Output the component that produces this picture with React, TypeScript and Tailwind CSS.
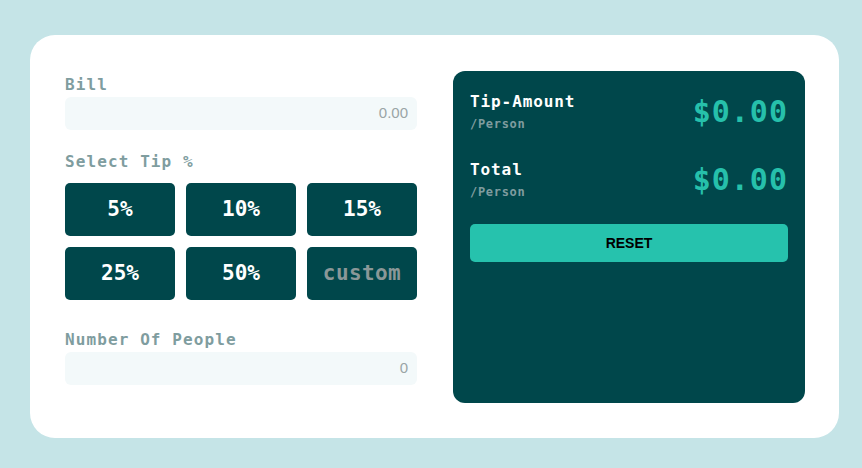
const tips = ['5%', '10%', '15%', '25%', '50%']

const mono = "font-['DejaVu_Sans_Mono','Liberation_Mono',monospace] font-bold"

function Field({ label, value, first }: { label: string; value: string; first?: boolean }) {
  return (
    <div className={first ? 'mt-[2px]' : 'mt-[28px]'}>
      <p className={`${mono} text-[16px] leading-[24px] tracking-[1.1px] text-[#7f9d9f]`}>{label}</p>
      <div className="flex h-[33px] items-center justify-end rounded-[6px] bg-[#f3f9fa] pr-[9px] font-['Liberation_Sans',Arial,sans-serif] text-[15px] text-[#9aa5a6]">
        {value}
      </div>
    </div>
  )
}

function ResultRow({ title, amount }: { title: string; amount: string }) {
  return (
    <div className="flex items-center justify-between">
      <div>
        <p className={`${mono} text-[16px] leading-[22px] tracking-[0.9px] text-white`}>{title}</p>
        <p className={`${mono} mt-[2px] text-[12px] leading-[18px] tracking-[0.7px] text-[#7f9c9f]`}>/Person</p>
      </div>
      <p className={`${mono} text-[30px] leading-[36px] tracking-[1px] text-[#26c0ab]`}>{amount}</p>
    </div>
  )
}

export default function App() {
  return (
    <div className="min-h-[468px] w-full bg-[#c5e4e7] pl-[30px] pt-[35px] pb-[30px]">
      <div className="flex h-[403px] w-[809px] gap-[36px] rounded-[25px] bg-white pl-[35px] pt-[36px]">
        {/* left: inputs */}
        <div className="w-[352px] shrink-0">
          <Field label="Bill" value="0.00" first />

          <p className={`${mono} mt-[20px] text-[16px] leading-[24px] tracking-[1.1px] text-[#7f9d9f]`}>Select Tip %</p>
          <div className="mt-[9px] grid grid-cols-3 gap-[11px]">
            {tips.map((t) => (
              <button
                key={t}
                className={`${mono} flex h-[53px] items-center justify-center rounded-[5px] bg-[#00474b] text-[21px] text-white`}
              >
                {t}
              </button>
            ))}
            <div
              className={`${mono} flex h-[53px] items-center justify-center rounded-[5px] bg-[#00474b] text-[21px] tracking-[0.4px] text-[#8a9798]`}
            >
              custom
            </div>
          </div>

          <Field label="Number Of People" value="0" />
        </div>

        {/* right: results */}
        <div className="h-[332px] w-[352px] shrink-0 rounded-[12px] bg-[#00474b] px-[17px] pt-[20px]">
          <ResultRow title="Tip-Amount" amount="$0.00" />
          <div className="mt-[26px]">
            <ResultRow title="Total" amount="$0.00" />
          </div>
          <button className="mt-[23px] flex h-[38px] w-full items-center justify-center rounded-[5px] bg-[#26c2ad] font-['Liberation_Sans',Arial,sans-serif] text-[14px] font-bold text-black">
            RESET
          </button>
        </div>
      </div>
    </div>
  )
}
